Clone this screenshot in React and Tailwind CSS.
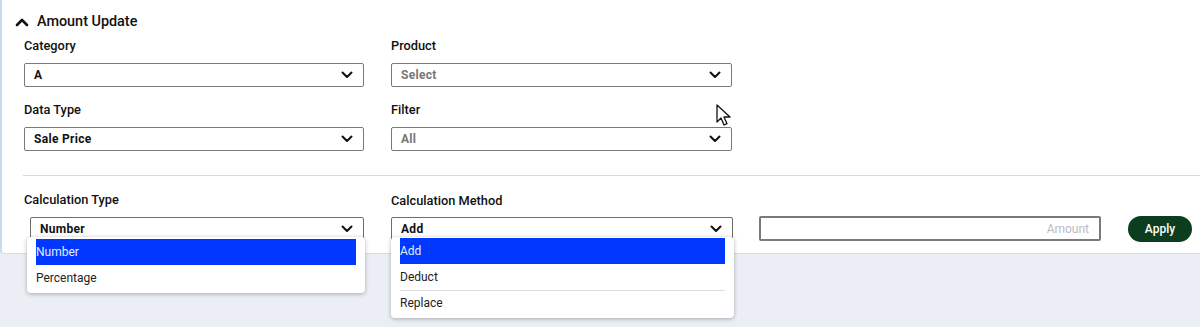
import React from "react";

const font = { fontFamily: "Roboto, 'Liberation Sans', sans-serif" };

function Chevron({ className = "" }) {
  return (
    <svg width="12" height="8" viewBox="0 0 12 8" className={className}>
      <path d="M1.5 1.5l4.5 4.5 4.5-4.5" fill="none" stroke="#111" strokeWidth="2" strokeLinecap="round" strokeLinejoin="round" />
    </svg>
  );
}

function Field({ label, value, muted, className = "" }) {
  return (
    <div className={`flex flex-col ${className}`}>
      <label className="text-[12.8px] leading-4 font-medium text-[#111]">{label}</label>
      <div className="mt-[9px] h-6 flex items-center justify-between border border-[#7a7a7a] rounded-[2px] pl-[9px] pr-[10px] bg-white">
        <span className={`text-[12px] font-bold tracking-[0.3px] ${muted ? "text-[#777]" : "text-[#111]"}`}>{value}</span>
        <Chevron />
      </div>
    </div>
  );
}

function Cursor() {
  return (
    <svg width="18" height="24" viewBox="0 0 18 24" className="absolute left-[713px] top-[103px]">
      <path d="M2 2v17l4-4 3 7 3-1.3-3-6.7h6z" fill="#fff" stroke="#111" strokeWidth="1.3" strokeLinejoin="round" />
    </svg>
  );
}

export default function App() {
  return (
    <div className="w-[1200px] h-[327px] bg-[#eceef6] overflow-hidden" style={font}>
      <div className="relative h-[254px] bg-white border-l-2 border-[#cbd8ef] border-b border-b-[#d6dce9] rounded-bl-[4px]">
        <div className="flex items-center pt-[13px] pl-[13px] h-[31px]">
          <svg width="14" height="10" viewBox="0 0 14 10">
            <path d="M2 8l5-5 5 5" fill="none" stroke="#111" strokeWidth="2.6" strokeLinecap="round" strokeLinejoin="round" />
          </svg>
          <span className="ml-[8px] text-[14.4px] font-medium text-[#111]">Amount Update</span>
        </div>

        <div className="pl-[22px] pt-[7px] grid grid-cols-[340px_341px] gap-x-[27px] gap-y-[15px]">
          <Field label="Category" value="A" />
          <Field label="Product" value="Select" muted />
          <Field label="Data Type" value="Sale Price" />
          <Field label="Filter" value="All" muted />
        </div>

        <div className="ml-[21px] mt-[24px] border-t border-[#d5d9e2]" />

        <div className="pl-[22px] pt-[16px] flex items-end">
          <div className="w-[340px] flex flex-col">
            <label className="text-[12.8px] leading-4 font-medium text-[#111]">Calculation Type</label>
            <div className="relative mt-[9px] ml-[6px]">
              <div className="h-6 flex items-center justify-between border border-[#6e6e6e] rounded-[2px] pl-[9px] pr-[10px] bg-white">
                <span className="text-[12px] font-bold tracking-[0.3px] text-[#111]">Number</span>
                <Chevron />
              </div>
              <div className="absolute left-[-3px] top-[20px] w-[338px] h-[56px] bg-white rounded-[4px] shadow-[0_1px_4px_rgba(0,0,0,0.3)] px-[9px] pt-[2px] z-10">
                <div className="h-[26px] flex items-center bg-[#0038ff] text-[#e4ecff] text-[12px]">Number</div>
                <div className="h-[26px] flex items-center text-[#222] text-[12px]">Percentage</div>
              </div>
            </div>
          </div>

          <div className="ml-[27px] w-[342px] flex flex-col">
            <label className="text-[12.8px] leading-4 font-medium text-[#111]">Calculation Method</label>
            <div className="relative mt-[8px]">
              <div className="h-6 flex items-center justify-between border border-[#6e6e6e] rounded-[2px] pl-[9px] pr-[10px] bg-white">
                <span className="text-[12px] font-bold tracking-[0.3px] text-[#111]">Add</span>
                <Chevron />
              </div>
              <div className="absolute left-0 top-[20px] w-[343px] h-[81px] bg-white rounded-[4px] shadow-[0_1px_4px_rgba(0,0,0,0.3)] px-[9px] pt-[1px] z-10">
                <div className="h-[26px] flex items-center bg-[#0038ff] text-[#e4ecff] text-[12px]">Add</div>
                <div className="h-[27px] flex items-center text-[#222] text-[12px] border-b border-[#dcdcdc]">Deduct</div>
                <div className="h-[24px] flex items-center text-[#222] text-[12px]">Replace</div>
              </div>
            </div>
          </div>

          <div className="ml-[26px] w-[342px] h-[25px] border-2 border-[#7a7a7a] rounded-[2px] flex items-center justify-end pr-[10px]">
            <span className="text-[12px] text-[#b8bcc6]">Amount</span>
          </div>

          <button className="ml-[27px] mb-[-1px] w-[64px] h-[26px] rounded-full bg-[#0c3d1e] text-white text-[12px] font-medium">Apply</button>
        </div>

        <Cursor />
      </div>
    </div>
  );
}
